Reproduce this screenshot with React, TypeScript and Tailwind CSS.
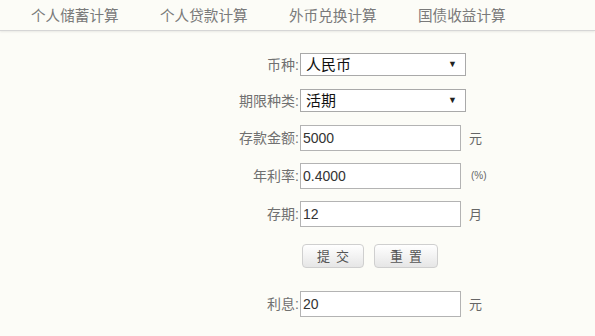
import React from 'react';

const font = { fontFamily: '"Liberation Sans", "Noto Sans CJK SC", sans-serif' };

const tabs = ['个人储蓄计算', '个人贷款计算', '外币兑换计算', '国债收益计算'];

const Label: React.FC<{ text: string }> = ({ text }) => (
  <div className="w-[300px] shrink-0 pr-[1px] text-right text-[14px] leading-none text-[#707070]">{text}:</div>
);

const Select: React.FC<{ value: string }> = ({ value }) => (
  <div className="flex h-[23px] w-[166px] items-center justify-between border border-[#a9a9a9] bg-white pl-[5px] pr-[8px] text-[15px] leading-none text-[#111]">
    <span>{value}</span>
    <span className="text-[9px] text-[#222]">▼</span>
  </div>
);

const Input: React.FC<{ value: string }> = ({ value }) => (
  <div className="flex h-[26px] w-[161px] items-center border border-[#b3b3b3] bg-white pl-[2px] text-[14px] leading-none text-[#333]">
    {value}
  </div>
);

export default function App() {
  return (
    <div className="h-[336px] w-[595px] overflow-hidden bg-[#fcfcf7]" style={font}>
      {/* Tabs */}
      <div className="flex h-[31px] items-center border-b border-[#d6d6d6] pl-[31px] pt-[2px] shadow-[0_1px_2px_rgba(0,0,0,0.08)]">
        {tabs.map((t) => (
          <div key={t} className="w-[129px] shrink-0 text-[14.6px] leading-none text-[#7a7a7a]">
            {t}
          </div>
        ))}
      </div>

      {/* Form */}
      <div className="flex flex-col">
        <div className="mt-[22px] flex items-center">
          <Label text="币种" />
          <Select value="人民币" />
        </div>
        <div className="mt-[13px] flex items-center">
          <Label text="期限种类" />
          <Select value="活期" />
        </div>
        <div className="mt-[13px] flex items-center">
          <Label text="存款金额" />
          <Input value="5000" />
          <span className="ml-[8px] text-[13px] leading-none text-[#666]">元</span>
        </div>
        <div className="mt-[12px] flex items-center">
          <Label text="年利率" />
          <Input value="0.4000" />
          <span className="ml-[10px] text-[10px] leading-none text-[#666]">(%)</span>
        </div>
        <div className="mt-[12px] flex items-center">
          <Label text="存期" />
          <Input value="12" />
          <span className="ml-[8px] text-[13px] leading-none text-[#666]">月</span>
        </div>
        <div className="mt-[17px] flex items-center gap-[10px] pl-[302px]">
          <button className="h-[24px] w-[62px] rounded-[4px] border border-[#cfcfcf] bg-gradient-to-b from-white to-[#e6e6e6] pl-[6px] text-[13px] leading-none tracking-[6px] text-[#555]">
            提交
          </button>
          <button className="h-[24px] w-[64px] rounded-[4px] border border-[#cfcfcf] bg-gradient-to-b from-white to-[#e6e6e6] pl-[6px] text-[13px] leading-none tracking-[6px] text-[#555]">
            重置
          </button>
        </div>
        <div className="mt-[23px] flex items-center">
          <Label text="利息" />
          <Input value="20" />
          <span className="ml-[8px] text-[13px] leading-none text-[#666]">元</span>
        </div>
      </div>
    </div>
  );
}
